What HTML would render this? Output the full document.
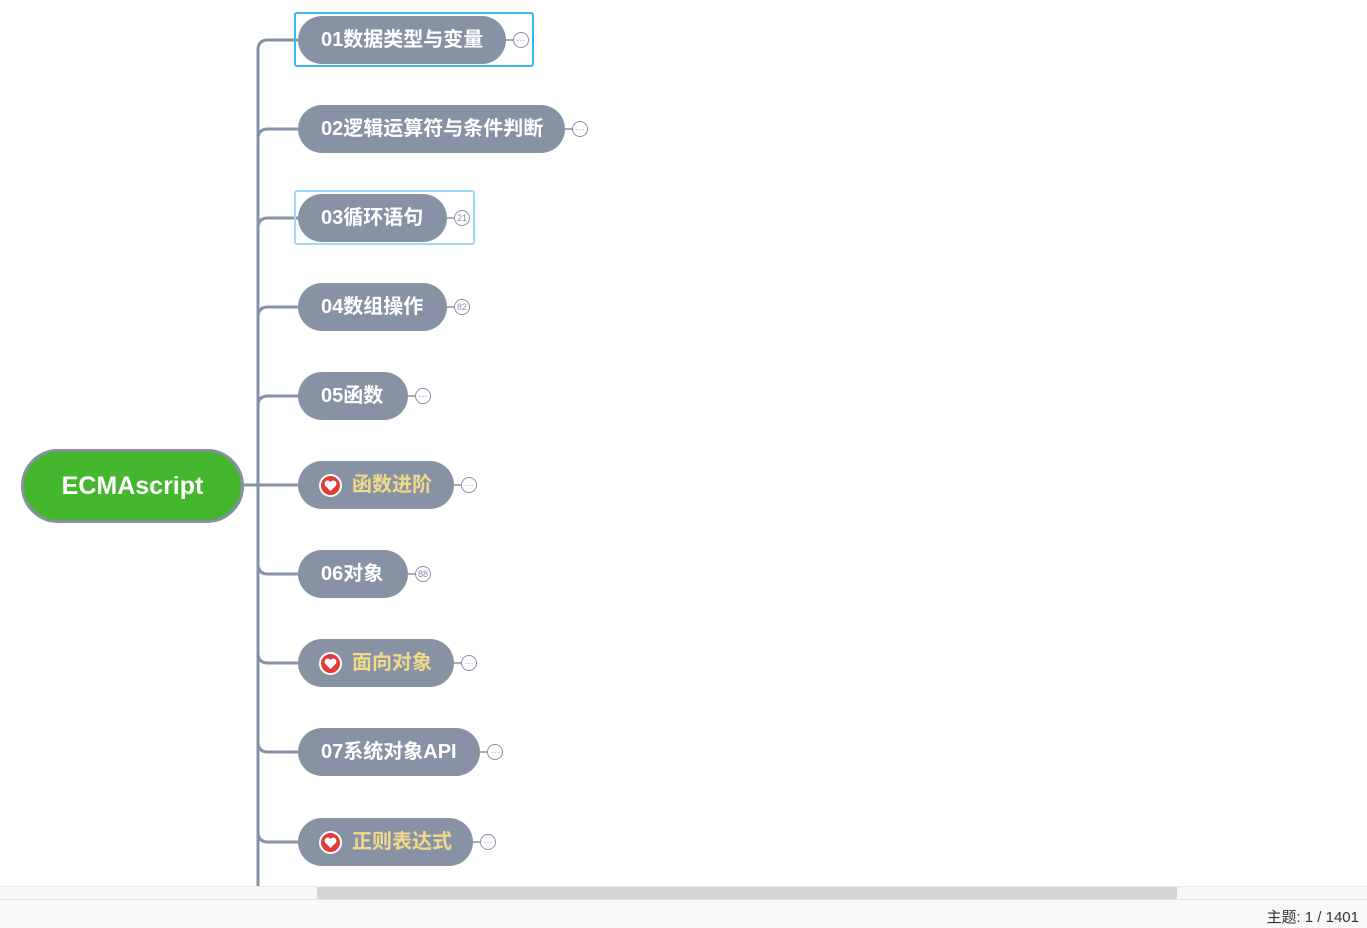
<!DOCTYPE html>
<html><head><meta charset="utf-8"><style>
body{margin:0;width:1367px;height:928px;background:#fff;position:relative;overflow:hidden;font-family:"Liberation Sans","Noto Sans CJK SC",sans-serif}
.n{position:absolute;left:298px;height:48px;border-radius:24px;background:#8792a5;color:#fff;font-weight:bold;font-size:20px;line-height:48px;padding-left:23px;box-sizing:border-box;white-space:nowrap}
.y{color:#f2d98a}
.hz{position:absolute;left:21px;top:13px;width:23px;height:23px;border-radius:50%;background:#e33b3b;border:2px solid #fff;box-sizing:border-box}
.hz svg{position:absolute;left:3px;top:3px}
.c{position:absolute;width:16px;height:16px;border:1px solid #8792a5;border-radius:50%;background:#fff;box-sizing:border-box;font-size:9px;line-height:14px;text-align:center;color:#8792a5}
.sel{position:absolute;border:2px solid #3bb6ef;border-radius:3px;box-sizing:border-box}
</style></head><body>
<svg style="position:absolute;left:0;top:0" width="1367" height="900">
<g fill="none" stroke="#8792a5" stroke-width="3">
<path d="M258 887 V50 Q258 40 268 40 H298"/>
<path d="M258 139 Q258 129 268 129 H298"/>
<path d="M258 228 Q258 218 268 218 H298"/>
<path d="M258 317 Q258 307 268 307 H298"/>
<path d="M258 406 Q258 396 268 396 H298"/>
<path d="M244 485 H298"/>
<path d="M258 564 Q258 574 268 574 H298"/>
<path d="M258 653 Q258 663 268 663 H298"/>
<path d="M258 742 Q258 752 268 752 H298"/>
<path d="M258 832 Q258 842 268 842 H298"/>
</g></svg>
<div style="position:absolute;left:21px;top:449px;width:223px;height:74px;border-radius:37px;background:#44b72f;border:3px solid #8690a3;box-sizing:border-box;color:#fff;font-weight:bold;font-size:25px;line-height:68px;text-align:center">ECMAscript</div>
<div class="sel" style="left:294px;top:12px;width:240px;height:55px"></div>
<div class="sel" style="left:294px;top:190px;width:181px;height:55px;border-color:#a0d8f5"></div>
<div class="n" style="top:16px;width:208px">01数据类型与变量</div>
<div class="n" style="top:105px;width:267px">02逻辑运算符与条件判断</div>
<div class="n" style="top:194px;width:149px">03循环语句</div>
<div class="n" style="top:283px;width:149px">04数组操作</div>
<div class="n" style="top:372px;width:110px">05函数</div>
<div class="n y" style="top:461px;width:156px;padding-left:54px"><span class="hz"><svg width="13" height="13" viewBox="0 0 13 13"><path d="M6.5 12 L1.5 7 C-0.5 5 1 1.5 3.7 1.5 C5 1.5 6 2.3 6.5 3.2 C7 2.3 8 1.5 9.3 1.5 C12 1.5 13.5 5 11.5 7 Z" fill="#fff"/></svg></span>函数进阶</div>
<div class="n" style="top:550px;width:110px">06对象</div>
<div class="n y" style="top:639px;width:156px;padding-left:54px"><span class="hz"><svg width="13" height="13" viewBox="0 0 13 13"><path d="M6.5 12 L1.5 7 C-0.5 5 1 1.5 3.7 1.5 C5 1.5 6 2.3 6.5 3.2 C7 2.3 8 1.5 9.3 1.5 C12 1.5 13.5 5 11.5 7 Z" fill="#fff"/></svg></span>面向对象</div>
<div class="n" style="top:728px;width:182px">07系统对象API</div>
<div class="n y" style="top:818px;width:175px;padding-left:54px"><span class="hz"><svg width="13" height="13" viewBox="0 0 13 13"><path d="M6.5 12 L1.5 7 C-0.5 5 1 1.5 3.7 1.5 C5 1.5 6 2.3 6.5 3.2 C7 2.3 8 1.5 9.3 1.5 C12 1.5 13.5 5 11.5 7 Z" fill="#fff"/></svg></span>正则表达式</div>
<svg style="position:absolute;left:0;top:0" width="1367" height="900"><g stroke="#8792a5" stroke-width="1.5">
<path d="M506 40H514M565 129H573M447 218H455M447 307H455M408 396H416M454 485H462M408 574H416M454 663H462M480 752H488M473 842H481"/></g></svg>
<div class="c" style="left:513px;top:32px">···</div>
<div class="c" style="left:572px;top:121px">···</div>
<div class="c" style="left:454px;top:210px">21</div>
<div class="c" style="left:454px;top:299px">82</div>
<div class="c" style="left:415px;top:388px">···</div>
<div class="c" style="left:461px;top:477px">···</div>
<div class="c" style="left:415px;top:566px">88</div>
<div class="c" style="left:461px;top:655px">···</div>
<div class="c" style="left:487px;top:744px">···</div>
<div class="c" style="left:480px;top:834px">···</div>
<div style="position:absolute;left:0;top:886px;width:1367px;height:13px;background:#f7f7f7;border-top:1px solid #ececec"></div>
<div style="position:absolute;left:317px;top:887px;width:860px;height:12px;background:#d6d6d6"></div>
<div style="position:absolute;left:0;top:899px;width:1367px;height:29px;background:#f9f9f9;border-top:1px solid #e3e3e3;box-sizing:border-box"></div>
<div style="position:absolute;right:8px;top:906px;font-size:15px;color:#333">主题: 1 / 1401</div>
</body></html>
